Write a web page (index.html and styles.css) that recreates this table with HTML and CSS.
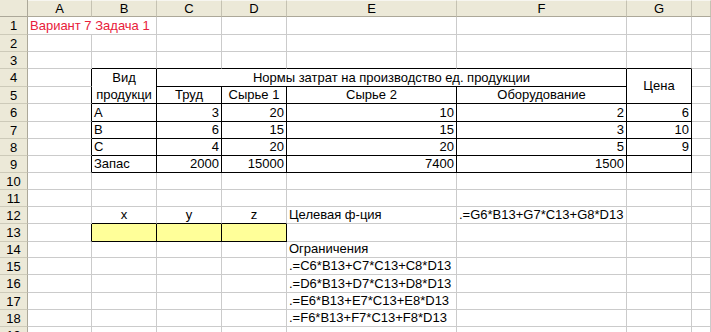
FILE: index.html
```html
<!DOCTYPE html>
<html>
<head>
<meta charset="utf-8">
<link rel="stylesheet" href="styles.css">
</head>
<body>
<div class="sheet">
  <div class="corner"></div><div class="ch">A</div><div class="ch">B</div><div class="ch">C</div><div class="ch">D</div><div class="ch">E</div><div class="ch">F</div><div class="ch">G</div><div class="ch"></div>

  <div class="rh">1</div><div class="c red cs2">Вариант 7 Задача 1</div><div class="c"></div><div class="c"></div><div class="c"></div><div class="c"></div><div class="c"></div><div class="c"></div>

  <div class="rh">2</div><div class="c"></div><div class="c"></div><div class="c"></div><div class="c"></div><div class="c"></div><div class="c"></div><div class="c"></div><div class="c"></div>

  <div class="rh">3</div><div class="c"></div><div class="c tb"></div><div class="c tb"></div><div class="c tb"></div><div class="c tb"></div><div class="c tb"></div><div class="c tb"></div><div class="c"></div>

  <div class="rh">4</div><div class="c tr"></div><div class="c t ctr rs2 wrap">Вид продукци</div><div class="c t ctr cs4">Нормы затрат на производство ед. продукции</div><div class="c t ctr rs2 mid">Цена</div><div class="c"></div>

  <div class="rh">5</div><div class="c tr"></div><div class="c t ctr">Труд</div><div class="c t ctr">Сырье 1</div><div class="c t ctr">Сырье 2</div><div class="c t ctr">Оборудование</div><div class="c"></div>

  <div class="rh">6</div><div class="c tr"></div><div class="c t">A</div><div class="c t num">3</div><div class="c t num">20</div><div class="c t num">10</div><div class="c t num">2</div><div class="c t num">6</div><div class="c"></div>

  <div class="rh">7</div><div class="c tr"></div><div class="c t">B</div><div class="c t num">6</div><div class="c t num">15</div><div class="c t num">15</div><div class="c t num">3</div><div class="c t num">10</div><div class="c"></div>

  <div class="rh">8</div><div class="c tr"></div><div class="c t">C</div><div class="c t num">4</div><div class="c t num">20</div><div class="c t num">20</div><div class="c t num">5</div><div class="c t num">9</div><div class="c"></div>

  <div class="rh">9</div><div class="c tr"></div><div class="c t">Запас</div><div class="c t num">2000</div><div class="c t num">15000</div><div class="c t num">7400</div><div class="c t num">1500</div><div class="c t"></div><div class="c"></div>

  <div class="rh">10</div><div class="c"></div><div class="c"></div><div class="c"></div><div class="c"></div><div class="c"></div><div class="c"></div><div class="c"></div><div class="c"></div>

  <div class="rh">11</div><div class="c"></div><div class="c"></div><div class="c"></div><div class="c"></div><div class="c"></div><div class="c"></div><div class="c"></div><div class="c"></div>

  <div class="rh">12</div><div class="c"></div><div class="c tb ctr">x</div><div class="c tb ctr">y</div><div class="c tb ctr">z</div><div class="c">Целевая ф-ция</div><div class="c">.=G6*B13+G7*C13+G8*D13</div><div class="c"></div><div class="c"></div>

  <div class="rh">13</div><div class="c tr"></div><div class="c t yl"></div><div class="c t yl"></div><div class="c t yl"></div><div class="c"></div><div class="c"></div><div class="c"></div><div class="c"></div>

  <div class="rh">14</div><div class="c"></div><div class="c"></div><div class="c"></div><div class="c"></div><div class="c">Ограничения</div><div class="c"></div><div class="c"></div><div class="c"></div>

  <div class="rh">15</div><div class="c"></div><div class="c"></div><div class="c"></div><div class="c"></div><div class="c">.=C6*B13+C7*C13+C8*D13</div><div class="c"></div><div class="c"></div><div class="c"></div>

  <div class="rh">16</div><div class="c"></div><div class="c"></div><div class="c"></div><div class="c"></div><div class="c">.=D6*B13+D7*C13+D8*D13</div><div class="c"></div><div class="c"></div><div class="c"></div>

  <div class="rh">17</div><div class="c"></div><div class="c"></div><div class="c"></div><div class="c"></div><div class="c">.=E6*B13+E7*C13+E8*D13</div><div class="c"></div><div class="c"></div><div class="c"></div>

  <div class="rh">18</div><div class="c"></div><div class="c"></div><div class="c"></div><div class="c"></div><div class="c">.=F6*B13+F7*C13+F8*D13</div><div class="c"></div><div class="c"></div><div class="c"></div>

  <div class="rh">19</div><div class="c"></div><div class="c"></div><div class="c"></div><div class="c"></div><div class="c"></div><div class="c"></div><div class="c"></div><div class="c"></div>
</div>
</body>
</html>
```

FILE: styles.css
```css
html, body {
  margin: 0;
  padding: 0;
  background: #ffffff;
  overflow: hidden;
}

body {
  font-family: "Liberation Sans", Arial, sans-serif;
  font-size: 13px;
  color: #000000;
}

.sheet {
  display: grid;
  grid-template-columns: 28px 64px 65px 65px 65px 170px 170px 65px 19px;
  grid-template-rows: 17px 18px 17px 17px 18px 17px 18px 17px 17px 17px 17px 17px 17px 18px 16px 17px 18px 17px 17px 17px;
  width: 711px;
  height: 332px;
  overflow: hidden;
}

.corner,
.ch,
.rh {
  box-sizing: border-box;
  background: #ece9d8;
  display: flex;
  align-items: center;
  justify-content: center;
  line-height: 15px;
  color: #000000;
}

.corner {
  border-right: 1px solid #aca899;
  border-bottom: 1px solid #aca899;
}

.ch {
  border-top: 1px solid #f7f6f0;
  border-right: 1px solid #c5c2b2;
  border-bottom: 1px solid #aca899;
}

.rh {
  border-right: 1px solid #aca899;
  border-bottom: 1px solid #cdcab9;
}

.c {
  box-sizing: border-box;
  border-right: 1px solid #cbcbcb;
  border-bottom: 1px solid #cbcbcb;
  display: flex;
  align-items: flex-end;
  justify-content: flex-start;
  padding: 0 2px 1px 2px;
  white-space: nowrap;
  line-height: 15px;
  overflow: hidden;
}

.num {
  justify-content: flex-end;
}

.ctr {
  justify-content: center;
  text-align: center;
}

.wrap {
  white-space: normal;
  line-height: 17px;
  padding-bottom: 0;
}

.mid {
  align-items: center;
}

.cs2 {
  grid-column: span 2;
}

.cs4 {
  grid-column: span 4;
}

.rs2 {
  grid-row: span 2;
}

.t {
  border-right: 1px solid #000000;
  border-bottom: 1px solid #000000;
}

.tb {
  border-bottom: 1px solid #000000;
}

.tr {
  border-right: 1px solid #000000;
}

.yl {
  background: #ffff99;
}

.red {
  color: #e8203a;
}
```
